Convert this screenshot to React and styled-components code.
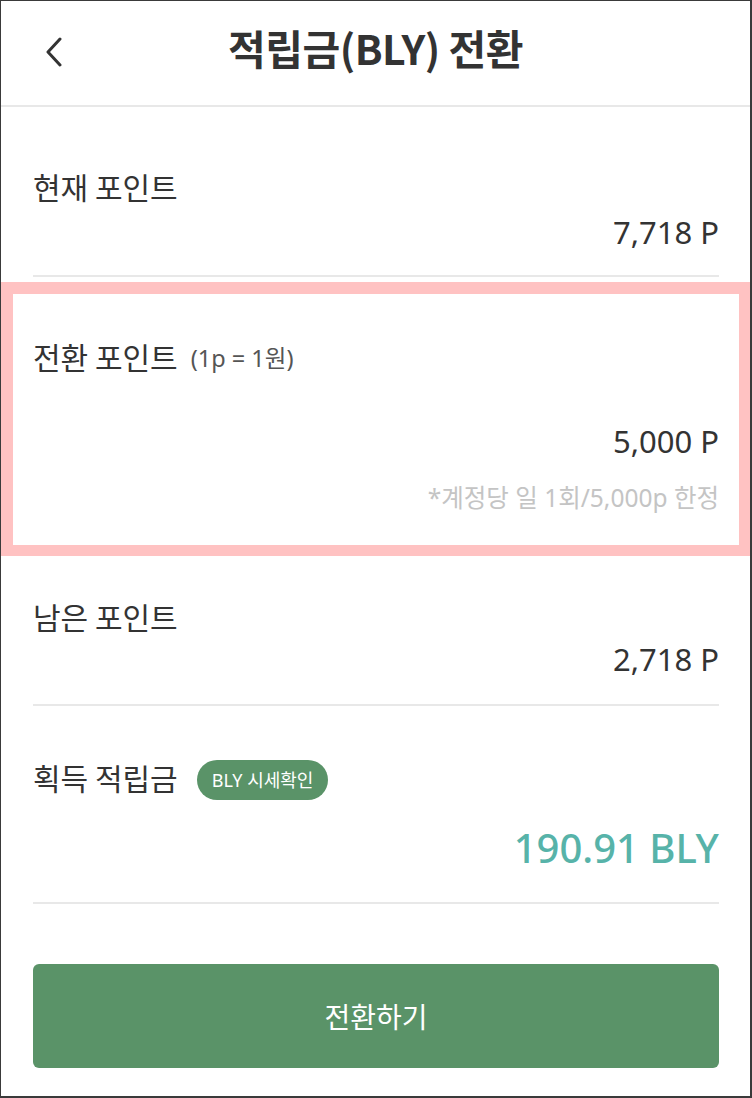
import React from "react";
import styled, { createGlobalStyle } from "styled-components";

const GlobalStyle = createGlobalStyle`
  html, body {
    margin: 0;
    padding: 0;
    background: #fff;
  }
  body {
    font-family: "Noto Sans", "Noto Sans CJK KR", sans-serif;
    color: #333;
  }
  * {
    box-sizing: border-box;
  }
`;

const Frame = styled.div`
  width: 752px;
  height: 1098px;
  border: 1px solid #3a3a3a;
  border-right-width: 2px;
  border-bottom-width: 2px;
  background: #fff;
  display: flex;
  flex-direction: column;
`;

const Header = styled.header`
  height: 106px;
  border-bottom: 2px solid #e8e8e8;
  display: flex;
  align-items: center;
  justify-content: center;
  position: relative;
`;

const BackButton = styled.button`
  position: absolute;
  left: 40px;
  top: 34px;
  width: 26px;
  height: 34px;
  padding: 0;
  border: none;
  background: none;
  display: flex;
  align-items: center;
  justify-content: center;
  cursor: pointer;
`;

const Title = styled.h1`
  margin: 0;
  margin-top: -12px;
  font-family: "Noto Sans CJK KR", "Noto Sans", sans-serif;
  font-size: 41px;
  font-weight: 700;
  color: #333;
  letter-spacing: -0.5px;
`;

const Section = styled.section`
  margin: 0 31px 0 32px;
  padding: ${(p) => p.pad};
  border-bottom: ${(p) => (p.divider ? "2px solid #e8e8e8" : "none")};
  display: flex;
  flex-direction: column;
`;

const Highlight = styled.section`
  margin-top: 5px;
  border: 12px solid #ffc2c2;
  border-right-width: 11px;
  border-bottom-width: 11px;
  padding: 42px 20px 32px 20px;
  display: flex;
  flex-direction: column;
`;

const LabelRow = styled.div`
  display: flex;
  align-items: center;
  height: 40px;
`;

const Label = styled.span`
  font-family: "Noto Sans CJK KR", sans-serif;
  font-size: 30px;
  line-height: 40px;
  color: #333;
`;

const Rate = styled.span`
  font-family: "Noto Sans", "Noto Sans CJK KR", sans-serif;
  font-size: 23.5px;
  color: #555;
  margin-left: 13px;
  margin-top: 2px;
`;

const Badge = styled.button`
  margin-left: 19px;
  margin-top: 6px;
  height: 40px;
  padding: 0 15px;
  border: none;
  border-radius: 20px;
  background: #5a9368;
  color: #fff;
  font-family: "Noto Sans", "Noto Sans CJK KR", sans-serif;
  font-size: 18px;
  line-height: 40px;
  cursor: pointer;
`;

const Value = styled.div`
  margin-top: ${(p) => p.gap}px;
  text-align: right;
  font-size: ${(p) => (p.big ? 40 : 31)}px;
  line-height: ${(p) => (p.big ? 56 : 40)}px;
  font-weight: ${(p) => (p.big ? 500 : 400)};
  color: ${(p) => (p.big ? "#57b3a9" : "#333")};
`;

const Note = styled.div`
  margin-top: 22px;
  text-align: right;
  font-size: 24.5px;
  line-height: 30px;
  color: #c4c4c4;
`;

const SubmitButton = styled.button`
  margin: 60px 31px 0 32px;
  height: 104px;
  border: none;
  border-radius: 6px;
  background: #5a9368;
  color: #fff;
  font-family: "Noto Sans CJK KR", sans-serif;
  font-size: 28px;
  cursor: pointer;
`;

const ChevronLeft = () => (
  <svg width="20" height="30" viewBox="0 0 20 30" fill="none">
    <path
      d="M16 2 L4 15 L16 28"
      stroke="#333"
      strokeWidth="3"
      strokeLinecap="round"
      strokeLinejoin="round"
    />
  </svg>
);

const App = () => {
  return (
    <Frame>
      <GlobalStyle />
      <Header>
        <BackButton aria-label="뒤로">
          <ChevronLeft />
        </BackButton>
        <Title>적립금(BLY) 전환</Title>
      </Header>

      <Section divider pad="59px 0 23px">
        <LabelRow>
          <Label>현재 포인트</Label>
        </LabelRow>
        <Value gap={6}>7,718 P</Value>
      </Section>

      <Highlight>
        <LabelRow>
          <Label>전환 포인트</Label>
          <Rate>(1p = 1원)</Rate>
        </LabelRow>
        <Value gap={45}>5,000 P</Value>
        <Note>*계정당 일 1회/5,000p 한정</Note>
      </Highlight>

      <Section divider pad="40px 0 25px">
        <LabelRow>
          <Label>남은 포인트</Label>
        </LabelRow>
        <Value gap={3}>2,718 P</Value>
      </Section>

      <Section divider pad="51px 0 26px">
        <LabelRow>
          <Label>획득 적립금</Label>
          <Badge>BLY 시세확인</Badge>
        </LabelRow>
        <Value big gap={23}>
          190.91 BLY
        </Value>
      </Section>

      <SubmitButton>전환하기</SubmitButton>
    </Frame>
  );
};

export default App;
